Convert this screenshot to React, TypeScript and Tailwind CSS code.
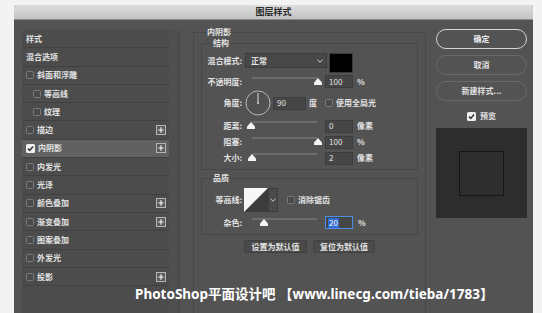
import type { ReactNode } from "react";

const rows = [
  { label: "样式", kind: "plain" },
  { label: "混合选项", kind: "plain" },
  { label: "斜面和浮雕", kind: "check" },
  { label: "等高线", kind: "sub" },
  { label: "纹理", kind: "sub" },
  { label: "描边", kind: "check", plus: true },
  { label: "内阴影", kind: "check", plus: true, active: true },
  { label: "内发光", kind: "check" },
  { label: "光泽", kind: "check" },
  { label: "颜色叠加", kind: "check", plus: true },
  { label: "渐变叠加", kind: "check", plus: true },
  { label: "图案叠加", kind: "check" },
  { label: "外发光", kind: "check" },
  { label: "投影", kind: "check", plus: true },
];

function Box({ checked }: { checked?: boolean }) {
  if (checked) {
    return (
      <svg width="9" height="9" viewBox="0 0 9 9" className="shrink-0">
        <rect x="0" y="0" width="9" height="9" rx="1.5" fill="#f0f0f0" />
        <path d="M2 4.6 L3.8 6.4 L7 2.6" stroke="#333" strokeWidth="1.5" fill="none" />
      </svg>
    );
  }
  return <div className="h-[8px] w-[8px] shrink-0 rounded-[1.5px] border border-[#7a7a7a] bg-[#4a4a4a]" />;
}

function Plus() {
  return (
    <svg width="10" height="10" viewBox="0 0 10 10" className="ml-auto shrink-0">
      <rect x="0.5" y="0.5" width="9" height="9" fill="#5c5c5c" stroke="#b5b5b5" />
      <path d="M5 2.3 V7.7 M2.3 5 H7.7" stroke="#f2f2f2" strokeWidth="1.2" />
    </svg>
  );
}

function Chevron() {
  return (
    <svg width="6" height="4" viewBox="0 0 6 4">
      <path d="M0.5 0.8 L3 3.2 L5.5 0.8" stroke="#cfcfcf" strokeWidth="1" fill="none" />
    </svg>
  );
}

function Label({ children }: { children: ReactNode }) {
  return <div className="w-[41px] shrink-0 pr-[1px] text-right font-bold">{children}</div>;
}

function Slider({ pct }: { pct: number }) {
  return (
    <div className="relative h-full w-[76px] shrink-0">
      <div className="absolute left-[7px] top-[2px] h-[2px] w-[65px] bg-[#6c6c6c]" />
      <svg
        className="absolute top-[3px]"
        style={{ left: 2 + pct * 0.67 }}
        width="8"
        height="7"
        viewBox="0 0 8 7"
      >
        <path d="M4 0 L8 4.5 L8 7 L0 7 L0 4.5 Z" fill="#f4f4f4" />
      </svg>
    </div>
  );
}

function NumInput({ value, focus }: { value: string; focus?: boolean }) {
  return (
    <div
      className={
        focus
          ? "ml-[4px] flex h-[13px] w-[28px] shrink-0 items-center border border-[#4d8fe6] bg-[#454545] pl-[2px]"
          : "ml-[4px] flex h-[13px] w-[28px] shrink-0 items-center border border-[#3d3d3d] bg-[#464646] pl-[3px]"
      }
    >
      {focus ? <span className="bg-[#2f6bcf] px-[1px] leading-[10px] text-white">{value}</span> : value}
    </div>
  );
}

export default function App() {
  return (
    <div className="relative h-[313px] w-[542px] overflow-hidden bg-[#f3f3f3] pl-[14px] pr-[9px] pt-[5px] font-['Noto_Sans_CJK_SC','Noto_Sans',sans-serif] text-[8px] text-[#e2e2e2]">
      <div className="flex h-[320px] flex-col rounded-t-[3px] bg-[#535353]">
        <div className="flex h-[15px] shrink-0 items-center justify-center rounded-t-[3px] border-b border-[#8c8c8c] bg-gradient-to-b from-[#dddddd] to-[#c3c3c3] text-[9px] font-bold text-[#2a2a2a]">
          图层样式
        </div>

        <div className="flex flex-1 pl-[8px] pr-[6px] pt-[10px]">
          {/* left style list */}
          <div className="flex w-[158px] shrink-0 border-r border-[#444]">
            <div className="w-[148px] bg-[#4c4c4c]">
              {rows.map((r) => (
                <div
                  key={r.label}
                  className={
                    "flex h-[18.3px] items-center gap-[3px] border-b border-[#414141] pr-[3px] " +
                    (r.active ? "bg-[#616161] " : "") +
                    (r.kind === "sub" ? "pl-[11px]" : "pl-[4px]")
                  }
                >
                  {r.kind !== "plain" && <Box checked={r.active} />}
                  <span className="font-bold leading-none">{r.label}</span>
                  {r.plus && <Plus />}
                </div>
              ))}
            </div>
            <div className="w-[10px] bg-[#4f4f4f]" />
          </div>

          {/* middle settings */}
          <fieldset className="ml-[13px] mt-[-3px] w-[233px] shrink-0 border border-[#474747] px-[7px] pt-[1px]">
            <legend className="ml-[5px] px-[1px] text-[8px] font-bold leading-[10px]">内阴影</legend>

            <fieldset className="border border-[#474747] pb-[4px] pt-[5px]">
              <legend className="ml-[10px] px-[1px] font-bold leading-[10px]">结构</legend>

              <div className="flex h-[19px] items-start">
                <div className="flex h-[15px] items-center">
                  <Label>混合模式:</Label>
                </div>
                <div className="ml-[2px] flex h-[15px] w-[82px] items-center justify-between border border-[#3c3c3c] bg-[#484848] pl-[5px] pr-[3px]">
                  <span className="font-bold">正常</span>
                  <Chevron />
                </div>
                <div className="ml-[2px] h-[20px] w-[24px] border border-[#3a3a3a] bg-black" />
              </div>

              <div className="mt-[3px] flex h-[13px] items-center">
                <Label>不透明度:</Label>
                <div className="ml-[2px] h-full"><Slider pct={100} /></div>
                <NumInput value="100" />
                <span className="ml-[4px] font-bold">%</span>
              </div>

              <div className="mt-[2px] flex h-[26px] items-center">
                <Label>角度:</Label>
                <svg width="26" height="26" viewBox="0 0 26 26" className="ml-[2px] shrink-0">
                  <circle cx="13" cy="13" r="12" stroke="#b8b8b8" strokeWidth="1" fill="#515151" />
                  <path d="M13 13 V3" stroke="#d8d8d8" strokeWidth="1" />
                  <circle cx="13" cy="13" r="1" fill="#d8d8d8" />
                </svg>
                <div className="ml-[2px] flex h-[13px] w-[33px] items-center border border-[#3d3d3d] bg-[#464646] pl-[3px]">90</div>
                <span className="ml-[3px] font-bold">度</span>
                <div className="ml-[8px]"><Box /></div>
                <span className="ml-[3px] font-bold">使用全局光</span>
              </div>

              <div className="mt-[3px] flex h-[14px] items-center">
                <Label>距离:</Label>
                <div className="ml-[2px] h-full"><Slider pct={0} /></div>
                <NumInput value="0" />
                <span className="ml-[4px] font-bold">像素</span>
              </div>

              <div className="mt-[2px] flex h-[14px] items-center">
                <Label>阻塞:</Label>
                <div className="ml-[2px] h-full"><Slider pct={100} /></div>
                <NumInput value="100" />
                <span className="ml-[4px] font-bold">%</span>
              </div>

              <div className="mt-[2px] flex h-[14px] items-center">
                <Label>大小:</Label>
                <div className="ml-[2px] h-full"><Slider pct={2} /></div>
                <NumInput value="2" />
                <span className="ml-[4px] font-bold">像素</span>
              </div>
            </fieldset>

            <fieldset className="mt-[3px] border border-[#474747] pb-[5px] pt-[5px]">
              <legend className="ml-[10px] px-[1px] font-bold leading-[10px]">品质</legend>

              <div className="flex h-[24px] items-center">
                <Label>等高线:</Label>
                <div className="ml-[1px] flex h-[24px]">
                  <svg width="24" height="24" viewBox="0 0 24 24" className="shrink-0">
                    <rect x="0" y="0" width="24" height="24" fill="#3c3c3c" />
                    <path d="M0 0 H24 L0 24 Z" fill="#f7f7f7" />
                  </svg>
                  <div className="flex w-[10px] items-center justify-center border border-[#3c3c3c] bg-[#4a4a4a]">
                    <Chevron />
                  </div>
                </div>
                <div className="ml-[9px]"><Box /></div>
                <span className="ml-[3px] font-bold">消除锯齿</span>
              </div>

              <div className="mt-[4px] flex h-[13px] items-center">
                <Label>杂色:</Label>
                <div className="ml-[2px] h-full"><Slider pct={20} /></div>
                <NumInput value="20" focus />
                <span className="ml-[5px] font-bold">%</span>
              </div>
            </fieldset>

            <div className="mt-[5px] flex justify-center gap-[6px]">
              <div className="flex h-[13px] w-[63px] items-center justify-center rounded-[2px] border border-[#404040] bg-[#4a4a4a] font-bold">
                设置为默认值
              </div>
              <div className="flex h-[13px] w-[62px] items-center justify-center rounded-[2px] border border-[#404040] bg-[#4a4a4a] font-bold">
                复位为默认值
              </div>
            </div>
          </fieldset>

          {/* right buttons and preview */}
          <div className="ml-[10px] mt-[-1px] flex w-[91px] shrink-0 flex-col">
            <div className="flex h-[20px] items-center justify-center rounded-full border border-[#d6d6d6] font-bold text-[#eeeeee]">
              确定
            </div>
            <div className="mt-[6px] flex h-[20px] items-center justify-center rounded-full border border-[#6a6a6a] font-bold">
              取消
            </div>
            <div className="mt-[6px] flex h-[20px] items-center justify-center rounded-full border border-[#6a6a6a] font-bold">
              新建样式...
            </div>
            <div className="mt-[9px] flex items-center justify-center gap-[4px]">
              <Box checked />
              <span className="font-bold">预览</span>
            </div>
            <div className="mt-[6px] flex h-[90px] items-center justify-center bg-[#2d2d2d]">
              <div className="h-[45px] w-[45px] border border-[#151515] bg-[#2e2e2e]" />
            </div>
          </div>
        </div>
      </div>

      <div className="absolute left-[135px] top-[285px] whitespace-nowrap font-['Noto_Sans','Noto_Sans_CJK_SC',sans-serif] text-[13.5px] font-bold leading-[18px] text-white">
        PhotoShop平面设计吧 【www.linecg.com/tieba/1783】
      </div>
    </div>
  );
}
